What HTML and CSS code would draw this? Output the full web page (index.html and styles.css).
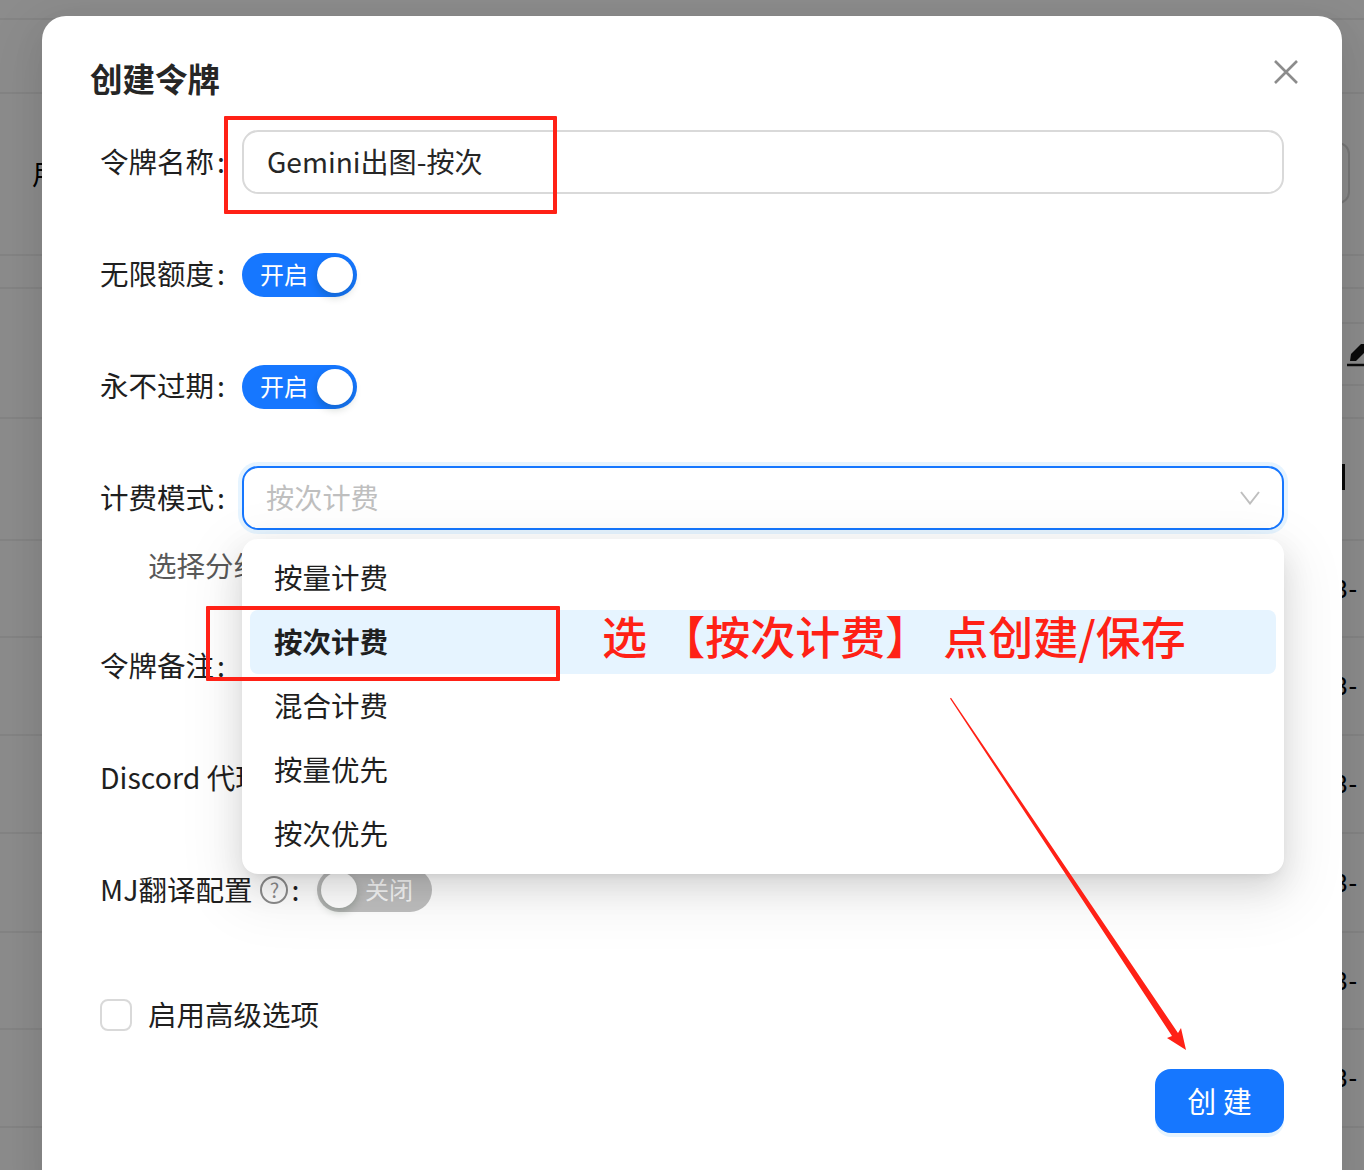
FILE: index.html
```html
<!DOCTYPE html>
<html lang="zh-CN">
<head>
<meta charset="utf-8">
<title>创建令牌</title>
<link rel="stylesheet" href="styles.css">
</head>
<body>
<div class="table">
  <div class="row h19"></div>
  <div class="row h74"></div>
  <div class="row h162"><span class="clip-left">用</span><span class="search-box"></span></div>
  <div class="row h33"></div>
  <div class="row h130 no-line-gap">
    <span></span>
    <div class="tools"><div class="tool-a"></div><div class="tool-b"><svg class="pencil" width="17" height="24" viewBox="0 0 17 24"><path d="M3 17 L4 10 L14 0 L17 0 L17 9 L9 17 Z" fill="#141414"/><path d="M0 21H17" stroke="#141414" stroke-width="2.5"/></svg></div></div>
  </div>
  <div class="row h122"><span></span><span class="bar"></span></div>
  <div class="row h97"><span></span><span class="date">3-</span></div>
  <div class="row h98"><span></span><span class="date">3-</span></div>
  <div class="row h98"><span></span><span class="date">3-</span></div>
  <div class="row h99"><span></span><span class="date">3-</span></div>
  <div class="row h97"><span></span><span class="date">3-</span></div>
  <div class="row h98"><span></span><span class="date">3-</span></div>
</div>

<div class="mask"></div>

<section class="modal">
  <h1 class="title">创建令牌</h1>
  <button class="close" aria-label="关闭"><svg width="26" height="26" viewBox="0 0 26 26"><path d="M2 2 L24 24 M24 2 L2 24" stroke="#8c8c8c" stroke-width="2.6" fill="none"/></svg></button>

  <div class="form">
    <div class="field">
      <label class="label">令牌名称<i>:</i></label>
      <div class="input">Gemini出图-按次</div>
    </div>
    <div class="field">
      <label class="label">无限额度<i>:</i></label>
      <div class="switch on"><span class="switch-text">开启</span><span class="knob"></span></div>
    </div>
    <div class="field">
      <label class="label">永不过期<i>:</i></label>
      <div class="switch on"><span class="switch-text">开启</span><span class="knob"></span></div>
    </div>
    <div class="field field-tight">
      <label class="label">计费模式<i>:</i></label>
      <div class="select">
        <span class="placeholder">按次计费</span>
        <svg class="chevron" width="20" height="14" viewBox="0 0 20 14"><path d="M1 1 L10 12.5 L19 1" stroke="#bfbfbf" stroke-width="2" fill="none"/></svg>
      </div>
    </div>
    <div class="helper">选择分组</div>
    <div class="field">
      <label class="label">令牌备注<i>:</i></label>
    </div>
    <div class="field">
      <label class="label label-wide">Discord 代理</label>
    </div>
    <div class="field">
      <label class="label label-auto">MJ翻译配置<span class="help">?</span><i>:</i></label>
      <div class="switch off"><span class="knob"></span><span class="switch-text">关闭</span></div>
    </div>
    <div class="advanced">
      <span class="checkbox"></span>
      <span class="advanced-text">启用高级选项</span>
    </div>
    <div class="footer"><button class="primary">创 建</button></div>
  </div>

  <ul class="dropdown">
    <li>按量计费</li>
    <li class="selected">按次计费</li>
    <li>混合计费</li>
    <li>按量优先</li>
    <li>按次优先</li>
  </ul>
</section>

<div class="mark mark-name"></div>
<div class="mark mark-option"></div>
<div class="note">选 【按次计费】 点创建/保存</div>
<svg class="arrow" width="260" height="370" viewBox="0 0 260 370"><path d="M0 0.4 L1 -0.3 L228 335 L231 330 L236 352 L217 340 L222 338 Z" fill="#ff2116"/></svg>
</body>
</html>
```
FILE: styles.css
```css
* { box-sizing: border-box; }
html, body { margin: 0; padding: 0; height: 1170px; overflow: hidden; }
body {
  position: relative;
  background: #fff;
  font-family: "Noto Sans CJK SC", "Noto Sans", sans-serif;
  font-size: 28.5px;
  color: #1f1f1f;
}
.table { display: flex; flex-direction: column; width: 1364px; color: #000; }
.row { display: flex; justify-content: space-between; align-items: center; border-bottom: 2px solid #f0f0f0; }
.h19 { height: 20px; }
.h74 { height: 74px; }
.h162 { height: 162px; }
.h33 { height: 33px; }
.h130 { height: 130px; align-items: stretch; }
.h122 { height: 122px; }
.h97 { height: 97px; }
.h98 { height: 98px; }
.h99 { height: 99px; }
.clip-left { margin-left: 32px; margin-bottom: 4px; }
.search-box { width: 60px; height: 62px; margin-right: 14px; margin-bottom: 2px; border: 2px solid #d9d9d9; border-radius: 12px; }
.tools { width: 40px; display: flex; flex-direction: column; }
.tool-a { height: 35px; border-bottom: 2px solid #f0f0f0; }
.tool-b { height: 62px; border-bottom: 2px solid #f0f0f0; padding: 20px 0 0 23px; }
.pencil { display: block; }
.bar { width: 22px; height: 26px; border-left: 3px solid #111; margin-bottom: 4px; }
.date { width: 31px; font-size: 26px; line-height: 30px; font-family: "Liberation Sans", sans-serif; white-space: nowrap; letter-spacing: 1px; }

.mask { position: absolute; inset: 0; background: rgba(0, 0, 0, .45); }

.modal {
  position: absolute;
  left: 42px;
  top: 16px;
  width: 1300px;
  height: 1180px;
  background: #fff;
  border-radius: 24px;
  padding: 40px 48px 0;
  overflow: hidden;
  box-shadow: 0 12px 32px rgba(0, 0, 0, .08), 0 18px 56px 16px rgba(0, 0, 0, .05);
}
.title { margin: 0; font-size: 32.5px; line-height: 44px; font-weight: 700; color: #262626; }
.close {
  position: absolute; right: 43px; top: 43px;
  width: 26px; height: 26px; padding: 0; border: 0; background: none; display: block;
}
.close svg { display: block; }

.form { margin: 30px 10px 0; }
.field { display: flex; align-items: center; height: 64px; margin-bottom: 48px; }
.field-tight { margin-bottom: 16px; }
.label { flex: none; width: 142px; line-height: 40px; padding-bottom: 2px; white-space: nowrap; display: flex; align-items: center; color: #1f1f1f; }
.label i { font-style: normal; margin-left: 3px; }
.label-auto { width: 217px; }
.help {
  display: inline-flex; align-items: center; justify-content: center;
  width: 28px; height: 28px; margin-left: 8px; margin-top: 2px;
  border: 2px solid #8c8c8c; border-radius: 50%;
  font-size: 20px; line-height: 1; color: #8c8c8c;
}
.input {
  flex: 1; height: 64px; line-height: 58px;
  border: 2px solid #d9d9d9; border-radius: 16px;
  padding: 0 23px; color: #262626; font-size: 28.1px;
}
.switch {
  width: 115px; height: 44px; border-radius: 22px; margin-top: 2px;
  display: flex; align-items: center; justify-content: space-between;
  font-size: 24px; color: #fff; padding: 0 4px;
}
.switch.on { background: #1677ff; padding-left: 18px; }
.switch.off { background: #bfbfbf; color: rgba(255, 255, 255, .9); padding-right: 19px; margin-top: 0; }
.knob { width: 36px; height: 36px; border-radius: 50%; background: #fff; box-shadow: 0 4px 8px rgba(0, 35, 11, .2); }
.switch-text { line-height: 44px; padding-bottom: 2px; }
.select {
  flex: 1; height: 64px; position: relative;
  display: flex; align-items: center; justify-content: space-between;
  border: 2px solid #1677ff; border-radius: 16px;
  box-shadow: 0 0 0 4px rgba(5, 145, 255, .1);
  padding: 0 22px;
}
.placeholder { color: #bfbfbf; line-height: 58px; height: 60px; font-size: 28.2px; }
.chevron { display: block; margin-top: 0; }
.helper { height: 40px; line-height: 38px; margin: 0 0 48px 48px; color: #595959; }
.advanced { display: flex; align-items: center; gap: 16px; height: 40px; margin-top: 73px; }
.advanced-text { line-height: 38px; height: 40px; }
.checkbox { width: 32px; height: 32px; border: 2px solid #d9d9d9; border-radius: 8px; }
.footer { display: flex; justify-content: flex-end; margin-top: 34px; }
.primary {
  width: 129px; height: 64px; border: 0; border-radius: 16px; padding: 0 0 2px;
  background: #1677ff; color: #fff;
  font: inherit; font-size: 29px; box-shadow: 0 4px 0 rgba(5, 145, 255, .1);
}

.dropdown {
  position: absolute; left: 200px; top: 523px;
  width: 1042px; height: 335px;
  list-style: none; margin: 0; padding: 7px 8px;
  background: #fff; border-radius: 16px;
  box-shadow: 0 12px 32px rgba(0, 0, 0, .12), 0 6px 12px -8px rgba(0, 0, 0, .14), 0 18px 56px 16px rgba(0, 0, 0, .06);
}
.dropdown li { height: 64px; line-height: 62px; padding: 0 24px; border-radius: 8px; color: #1f1f1f; }
.dropdown .selected { background: #e6f4ff; font-weight: 700; }

.mark { position: absolute; border: 4px solid #ff2116; border-radius: 1px; }
.mark-name { left: 224px; top: 116px; width: 333px; height: 98px; }
.mark-option { left: 206px; top: 606px; width: 354px; height: 75px; }
.note {
  position: absolute; left: 602px; top: 604px;
  font-size: 45px; line-height: 64px; font-weight: 500; color: #ff2116;
  white-space: pre; word-spacing: 3px;
}
.arrow { position: absolute; left: 950px; top: 698px; overflow: visible; }
```
